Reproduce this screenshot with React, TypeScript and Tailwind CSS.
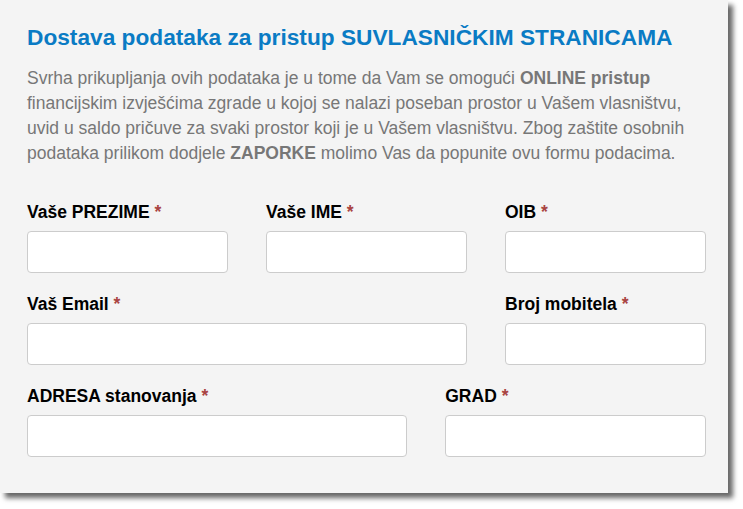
import React from "react";

type Field = {
  label: React.ReactNode;
  span: string;
};

const rows: Field[][] = [
  [
    { label: "Vaše PREZIME", span: "col-span-4" },
    { label: "Vaše IME", span: "col-span-4" },
    { label: "OIB", span: "col-span-4" },
  ],
  [
    { label: "Vaš Email", span: "col-span-8" },
    { label: "Broj mobitela", span: "col-span-4" },
  ],
  [
    { label: "ADRESA stanovanja", span: "col-span-7" },
    { label: "GRAD", span: "col-span-5" },
  ],
];

function FormField({ label, span }: Field) {
  return (
    <div className={`${span} flex flex-col`}>
      <label className="h-[20px] text-[17.5px] font-bold leading-[20px] text-black">
        {label} <span className="text-[#a94442]">*</span>
      </label>
      <input
        type="text"
        className="mt-[9px] h-[42px] w-full rounded-[4px] border border-[#cccccc] bg-white px-3 outline-none"
      />
    </div>
  );
}

export default function App() {
  return (
    <div className="min-h-screen bg-white" style={{ fontFamily: '"Liberation Sans", Arial, sans-serif' }}>
      <div className="h-[493px] w-[728px] bg-[#f4f4f4] pl-[27px] pr-[22px] pt-[23px] shadow-[5px_5px_5px_rgba(0,0,0,0.6)]">
        <h1 className="text-[22.7px] font-bold leading-[28px] text-[#0a7bc4]">
          Dostava podataka za pristup SUVLASNIČKIM STRANICAMA
        </h1>
        <p className="mt-[15px] text-[17.5px] leading-[25px] text-[#777777]">
          Svrha prikupljanja ovih podataka je u tome da Vam se omogući <b>ONLINE pristup</b> financijskim izvješćima
          zgrade u kojoj se nalazi poseban prostor u Vašem vlasništvu, uvid u saldo pričuve za svaki prostor koji je u
          Vašem vlasništvu. Zbog zaštite osobnih podataka prilikom dodjele <b>ZAPORKE</b> molimo Vas da popunite ovu
          formu podacima.
        </p>
        <div className="mt-[36px] flex flex-col gap-y-[21px]">
          {rows.map((row, i) => (
            <div key={i} className="grid grid-cols-12 gap-x-[38px]">
              {row.map((f, j) => (
                <FormField key={j} {...f} />
              ))}
            </div>
          ))}
        </div>
      </div>
    </div>
  );
}
